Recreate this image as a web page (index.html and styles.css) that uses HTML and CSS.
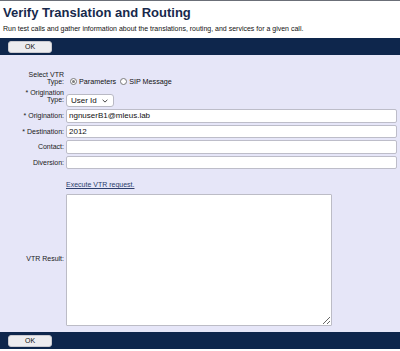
FILE: index.html
```html
<!DOCTYPE html>
<html>
<head>
<meta charset="utf-8">
<link rel="stylesheet" href="styles.css">
</head>
<body>
<div class="page">
  <h1 class="title">Verify Translation and Routing</h1>
  <p class="sub">Run test calls and gather information about the translations, routing, and services for a given call.</p>
  <div class="bar"><button class="ok" type="button">OK</button></div>
  <div class="panel">
    <div class="form">
      <div class="lbl lbl-radio">Select VTR<br>Type:</div>
      <div class="ctl radios">
        <span class="radio checked"></span><span class="rtext">Parameters</span>
        <span class="radio"></span><span class="rtext">SIP Message</span>
      </div>

      <div class="lbl lbl-sel">* Origination<br>Type:</div>
      <div class="ctl">
        <span class="selwrap">
          <select class="sel"><option>User Id</option></select>
          <svg class="chev" width="6" height="4" viewBox="0 0 6 4"><path d="M0.6 0.8 L3 3.1 L5.4 0.8" fill="none" stroke="#333" stroke-width="0.9"/></svg>
        </span>
      </div>

      <div class="lbl">* Origination:</div>
      <div class="ctl"><input class="inp" type="text" value="ngnuserB1@mleus.lab"></div>

      <div class="lbl">* Destination:</div>
      <div class="ctl"><input class="inp" type="text" value="2012"></div>

      <div class="lbl">Contact:</div>
      <div class="ctl"><input class="inp" type="text" value=""></div>

      <div class="lbl">Diversion:</div>
      <div class="ctl"><input class="inp" type="text" value=""></div>

      <div class="lbl"></div>
      <div class="ctl linkrow"><a class="link" href="#">Execute VTR request.</a></div>

      <div class="lbl lbl-mid">VTR Result:</div>
      <div class="ctl"><textarea class="result"></textarea></div>
    </div>
  </div>
  <div class="bar bottom"><button class="ok" type="button">OK</button></div>
</div>
</body>
</html>
```

FILE: styles.css
```css
* { box-sizing: border-box; }
html, body { margin: 0; padding: 0; background: #ffffff; }
body {
  font-family: "Liberation Sans", Arial, Helvetica, sans-serif;
  color: #1a1a1a;
  border-top: 1px solid #6b6f78;
}
.page { display: flex; flex-direction: column; }
.title {
  margin: 0;
  padding: 4px 0 0 3px;
  font-size: 13px;
  line-height: 16px;
  font-weight: bold;
  color: #17294c;
}
.sub {
  margin: 0;
  padding: 3px 0 0 3px;
  font-size: 7px;
  line-height: 9px;
  color: #111;
}
.bar {
  margin-top: 5px;
  height: 17px;
  background: #0e264c;
  display: flex;
  align-items: center;
  padding-left: 8px;
}
.bar.bottom { margin-top: 0; height: 17px; }
.ok {
  width: 44px;
  height: 12px;
  padding: 0;
  border: 1px solid #c9c9cf;
  border-radius: 3px;
  background: #ececef;
  font-family: "Liberation Sans", Arial, sans-serif;
  font-size: 7px;
  line-height: 10px;
  color: #111;
}
.panel {
  background: #e6e6f8;
  padding: 16px 0 6px 0;
}
.form {
  display: grid;
  grid-template-columns: 64px 1fr;
  column-gap: 2px;
  row-gap: 2px;
  padding-right: 3px;
}
.lbl {
  text-align: right;
  font-size: 7px;
  line-height: 7px;
  color: #1a1a1a;
  align-self: center;
}
.lbl-radio { align-self: end; padding-bottom: 2px; }
.lbl-sel { align-self: end; padding-bottom: 4px; }
.lbl-mid { align-self: center; }
.ctl { display: flex; align-items: center; min-height: 13.5px; }
.radios { padding-top: 4px; font-size: 7.2px; }
.radio {
  width: 7px; height: 7px;
  border: 1px solid #7a7a7a;
  border-radius: 50%;
  background: #fff;
  margin-left: 4px;
  margin-right: 2px;
  display: inline-flex;
  align-items: center;
  justify-content: center;
}
.radio.checked::after {
  content: "";
  width: 3px; height: 3px;
  border-radius: 50%;
  background: #7d7d7d;
}
.rtext { color: #111; }
.selwrap { position: relative; display: inline-block; margin-top: 5px; }
.sel {
  -webkit-appearance: none;
  appearance: none;
  width: 48px;
  height: 13px;
  padding: 0 0 0 4px;
  border: 1px solid #b9b9c4;
  border-radius: 3px;
  background: #fff;
  font-family: "Liberation Sans", Arial, sans-serif;
  font-size: 8px;
  color: #111;
  display: block;
}
.chev { position: absolute; right: 6px; top: 5px; }
.inp {
  width: 100%;
  height: 13.5px;
  padding: 0 2px;
  border: 1px solid #bdbdc9;
  border-radius: 2px;
  background: #fff;
  font-family: "Liberation Sans", Arial, sans-serif;
  font-size: 8px;
  color: #111;
  outline: none;
}
.linkrow { padding-top: 10px; }
.link {
  font-size: 7px;
  line-height: 8px;
  color: #2b3d6c;
  text-decoration: underline;
}
.result {
  width: 266px;
  height: 132px;
  border: 1px solid #bcbcc6;
  border-radius: 1px;
  background: #fff;
  resize: both;
  margin: 3px 0 0 0;
  display: block;
}
```
